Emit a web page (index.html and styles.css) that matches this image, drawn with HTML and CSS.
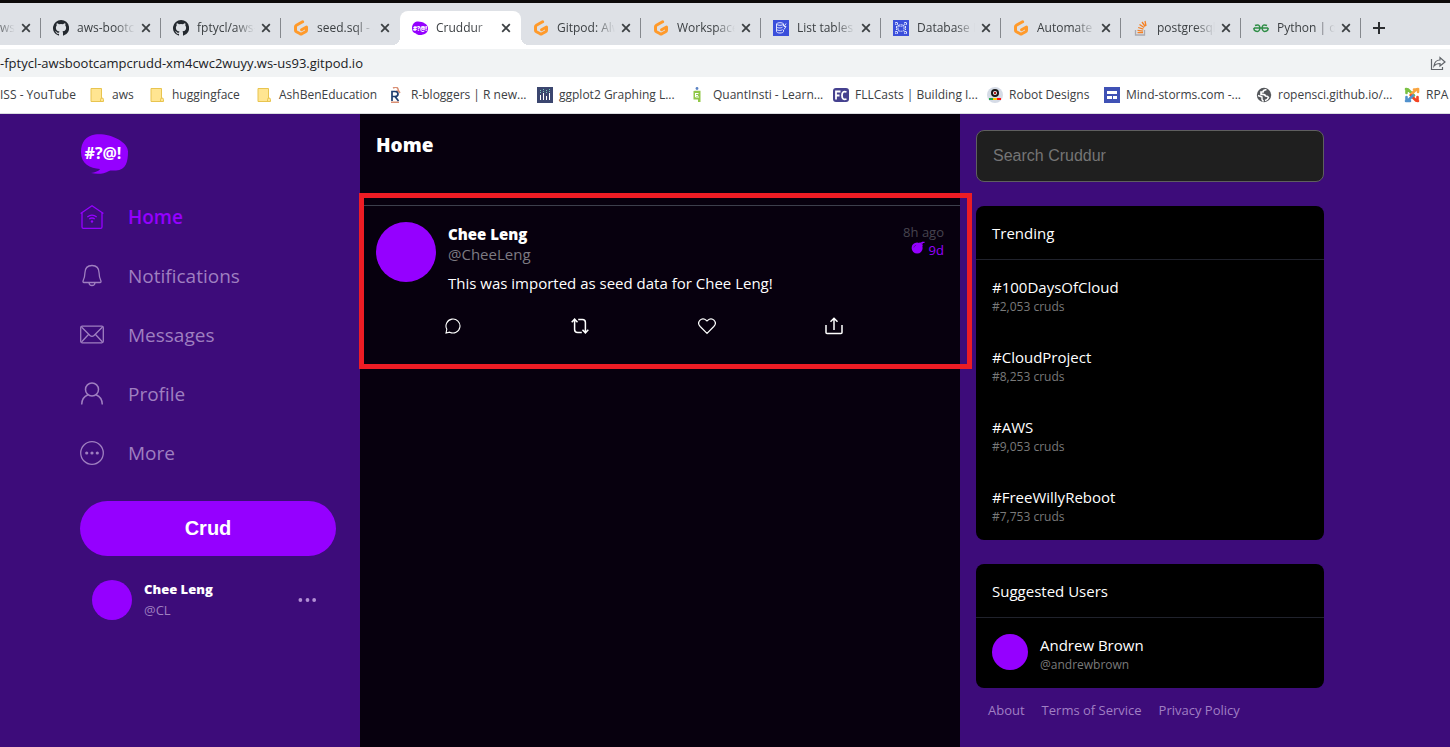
FILE: index.html
```html
<!DOCTYPE html>
<html lang="en">
<head>
<meta charset="utf-8">
<title>Cruddur</title>
<link rel="stylesheet" href="styles.css">
</head>
<body>
<svg class="sprite" aria-hidden="true">
  <symbol id="close" viewBox="0 0 10 10"><path d="M1.2 1.2l7.6 7.6M8.8 1.2L1.2 8.8" fill="none" stroke="#3c4043" stroke-width="1.8"/></symbol>
  <symbol id="github" viewBox="0 0 16 16"><path fill="#24292f" d="M8 0a8 8 0 0 0-2.53 15.59c.4.07.55-.17.55-.38v-1.34c-2.23.48-2.7-1.07-2.7-1.07-.36-.93-.89-1.17-.89-1.17-.73-.5.05-.49.05-.49.8.06 1.23.83 1.23.83.71 1.23 1.87.87 2.33.66.07-.52.28-.87.5-1.07-1.77-.2-3.64-.89-3.64-3.95 0-.88.31-1.59.82-2.15-.08-.2-.36-1.02.08-2.12 0 0 .67-.22 2.2.82a7.6 7.6 0 0 1 4 0c1.53-1.04 2.2-.82 2.2-.82.44 1.1.16 1.92.08 2.12.51.56.82 1.27.82 2.15 0 3.07-1.87 3.75-3.65 3.95.29.25.54.73.54 1.48v2.2c0 .21.15.46.55.38A8 8 0 0 0 8 0z"/></symbol>
  <symbol id="gitpod" viewBox="0 0 16 16"><path d="M9.6 1.8L3.4 5.2Q2.5 5.700 2.500 6.700V10.200Q2.500 11.200 3.400 11.700L7.200 13.800Q8 14.200 8.800 13.800L12.600 11.700Q13.500 11.200 13.500 10.200V7L8.600 9.700" fill="none" stroke="#ff9a2b" stroke-width="3" stroke-linejoin="round" stroke-linecap="round"/></symbol>
  <symbol id="bubble" viewBox="0 0 48 40"><path d="M15 .5C28-1.500 48 7 48 17.500C48 28 46 36 36 36.500C33 36.700 31 36 29 37C24 40 17 40.500 11 39C15 38.500 19 37 20 35C10 34.500 1 30 1 18C1 8 6 2 15 .5z" fill="#9500ff"/></symbol>
  <symbol id="folder" viewBox="0 0 14 14"><path d="M1 .5H11.500V10H12Q13.500 10 13.500 11.500V13.500H1z" fill="#ffe591" stroke="#e8c44f"/><path d="M10.500 13.500V11.500Q10.500 10 12 10" fill="none" stroke="#e8c44f"/></symbol>
</svg>

<header class="browser">
  <div class="tabs">
    <div class="tab tab-cut"><span class="tab-title">ws-</span><button class="tab-close" aria-label="Close tab"><svg><use href="#close"/></svg></button></div>
    <div class="tab"><svg class="favicon"><use href="#github"/></svg><span class="tab-title">aws-bootcamp</span><button class="tab-close" aria-label="Close tab"><svg><use href="#close"/></svg></button></div>
    <div class="tab"><svg class="favicon"><use href="#github"/></svg><span class="tab-title">fptycl/aws-boot</span><button class="tab-close" aria-label="Close tab"><svg><use href="#close"/></svg></button></div>
    <div class="tab tab-before"><svg class="favicon"><use href="#gitpod"/></svg><span class="tab-title">seed.sql - aws</span><button class="tab-close" aria-label="Close tab"><svg><use href="#close"/></svg></button></div>
    <div class="tab tab-active"><svg class="favicon" viewBox="0 0 16 16"><path d="M5 1.500C10 1 16 4 16 8S14 14 11 14.500C8 15.500 5 15 4 13.500C1 13 0 11 0 8S2 2 5 1.500z" fill="#9500ff"/><text x="8" y="10.500" text-anchor="middle" class="favicon-text">#?@!</text></svg><span class="tab-title">Cruddur</span><button class="tab-close" aria-label="Close tab"><svg><use href="#close"/></svg></button></div>
    <div class="tab tab-after"><svg class="favicon"><use href="#gitpod"/></svg><span class="tab-title">Gitpod: Always</span><button class="tab-close" aria-label="Close tab"><svg><use href="#close"/></svg></button></div>
    <div class="tab"><svg class="favicon"><use href="#gitpod"/></svg><span class="tab-title">Workspaces</span><button class="tab-close" aria-label="Close tab"><svg><use href="#close"/></svg></button></div>
    <div class="tab"><svg class="favicon" viewBox="0 0 16 16"><path fill="#3b4fdb" d="M0 0h16v16H0z"/><g fill="none" stroke="#dfe4ff"><ellipse cx="7" cy="4" rx="3.500" ry="1.300"/><path d="M3.500 4v7.500c0 2 7 2 7 0V10M3.500 6.500c0 1.800 5 1.800 6 .6M3.500 9c0 1.800 5 1.800 6 .6M10.500 4v2M13 3.500l-2 3h2l-2 3"/></g></svg><span class="tab-title">List tables</span><button class="tab-close" aria-label="Close tab"><svg><use href="#close"/></svg></button></div>
    <div class="tab"><svg class="favicon" viewBox="0 0 16 16"><path fill="#3b4fdb" d="M0 0h16v16H0z"/><g fill="none" stroke="#dfe4ff"><path d="M5 5.500v5q3 1.500 6 0v-5q-3-1.500-6 0q3 1.500 6 0M2.500 2.500h2v2h-2zM11.500 2.500h2v2h-2zM2.500 11.500h2v2h-2zM11.500 11.500h2v2h-2zM3.500 6v4M12.500 6v4" stroke-dasharray="2 .5"/></g></svg><span class="tab-title">Database D</span><button class="tab-close" aria-label="Close tab"><svg><use href="#close"/></svg></button></div>
    <div class="tab"><svg class="favicon"><use href="#gitpod"/></svg><span class="tab-title">Automate</span><button class="tab-close" aria-label="Close tab"><svg><use href="#close"/></svg></button></div>
    <div class="tab"><svg class="favicon" viewBox="0 0 16 16"><path d="M2.500 10v5h9v-5" fill="none" stroke="#a9a9b0" stroke-width="1.300"/><path d="M4.500 12.700h5.500M4.500 10.300l5.500.8M5.200 7.500l5.200 1.700M6.500 4.500l4.600 3M9 2l3.200 4.500M12 1l1 5" fill="none" stroke="#f48024" stroke-width="1.300"/></svg><span class="tab-title">postgresql</span><button class="tab-close" aria-label="Close tab"><svg><use href="#close"/></svg></button></div>
    <div class="tab"><svg class="favicon" viewBox="0 0 16 16"><path d="M1 8h14M2 5.500q4.500-2 5 2.500q-.5 4.500-4.500 3q-2-1-1.500-3M14 5.500q-4.500-2-5 2.500q.5 4.500 4.500 3q2-1 1.500-3" fill="none" stroke="#2f8d46" stroke-width="1.500"/></svg><span class="tab-title">Python | os</span><button class="tab-close" aria-label="Close tab"><svg><use href="#close"/></svg></button></div>
    <button class="new-tab" aria-label="New tab"><svg viewBox="0 0 12 12"><path d="M6 0v12M0 6h12" stroke="#2b2d30" stroke-width="2"/></svg></button>
  </div>
  <div class="address">
    <span>-fptycl-awsbootcampcrudd-xm4cwc2wuyy.ws-us93.gitpod.io</span>
    <button class="share" aria-label="Share"><svg viewBox="0 0 16 16"><path d="M1.500 4v10.500h11V12M4 11c.5-4 2.500-6 6-6V2.500L15 7l-5 4V8.500C7.500 8.500 5.500 9 4 11z" fill="none" stroke="#5f6368" stroke-width="1.200"/></svg></button>
  </div>
  <nav class="bookmarks" aria-label="Bookmarks">
    <a href="#">ISS - YouTube</a>
    <a href="#"><svg viewBox="0 0 16 16"><use href="#folder" x="0" y="1" width="14" height="14"/></svg>aws</a>
    <a href="#"><svg viewBox="0 0 16 16"><use href="#folder" x="0" y="1" width="14" height="14"/></svg>huggingface</a>
    <a href="#"><svg viewBox="0 0 16 16"><use href="#folder" x="0" y="1" width="14" height="14"/></svg>AshBenEducation</a>
    <a href="#"><svg viewBox="0 0 16 16"><path d="M4 1q4-2 5 1t-2 2M9 3l2 3M2 15.300h8" fill="none" stroke="#d98f74" stroke-width="1.500"/><path d="M3 14V4.500h3q3 0 3 2.500t-3 2.500H3M6 9.500l3.500 4.500" fill="none" stroke="#1e3d6e" stroke-width="1.700"/></svg>R-bloggers | R new...</a>
    <a href="#"><svg viewBox="0 0 16 16"><path fill="#3b466f" d="M0 0h16v16H0z"/><path d="M3.500 8v5M6.500 6v7M9.500 9v4M12.500 6v7" stroke="#fff"/><path d="M3.500 3v3M6.500 2v3M9.500 3v4M12.500 2v3" stroke="#74c7b8" stroke-dasharray="1 1"/></svg>ggplot2 Graphing L...</a>
    <a href="#"><svg viewBox="0 0 16 16"><circle cx="6" cy="1.500" r="1.400" fill="#5d84c4"/><path d="M4 3.800h5.500V15H7v-2.500H2.500V4z" fill="#91c848"/><path d="M4.500 6.500h3M4.500 6v4h3.500M4.500 8.500h2.500" stroke="#fff" fill="none"/></svg>QuantInsti - Learn...</a>
    <a href="#"><svg viewBox="0 0 16 16"><rect y="1" width="16" height="14" rx="3" fill="#45418f"/><path d="M3 12.500v-8h4.500M3 8.500h3.500M13.500 5q-4.500-1.500-4.500 3.500t4.500 3.500" fill="none" stroke="#fff" stroke-width="1.800"/></svg>FLLCasts | Building I...</a>
    <a href="#"><svg viewBox="0 0 16 16"><circle cx="8" cy="8" r="8" fill="#d5dbe6"/><circle cx="8" cy="6" r="4" fill="#191919"/><circle cx="8" cy="6" r="2" fill="#fff"/><circle cx="8" cy="6" r="1.200" fill="#b32020"/><path d="M2 12h4" stroke="#22a34a" stroke-width="2"/><path d="M6 12h4" stroke="#ffc800" stroke-width="2"/><path d="M10 12h4" stroke="#f11" stroke-width="2"/></svg>Robot Designs</a>
    <a href="#"><svg viewBox="0 0 16 16"><path fill="#3f51b5" d="M0 0h16v16H0z"/><path fill="#fff" d="M3 4h10v3H3zM3 9h5v3H3zM9 9h4v3H9z"/></svg>Mind-storms.com -...</a>
    <a href="#"><svg viewBox="0 0 16 16"><circle cx="8" cy="8" r="7.200" fill="#54575b"/><path d="M10.500 2.500Q7 3 7 5H5V7.500Q9 7 9.500 9Q12 9 12.500 10.500Q11.500 13 9 13.500" fill="none" stroke="#fff" stroke-width="1.600"/><path d="M2 8.500l4 1.500v2.500l1.500 2" fill="none" stroke="#fff" stroke-width="1.400"/></svg>ropensci.github.io/...</a>
    <a href="#"><svg viewBox="0 0 16 16"><g fill="none" stroke-width="2.600" stroke-linecap="round"><path d="M2 2l2 .5L10 8.500M2.500 2.500V6" stroke="#7ac143"/><path d="M14 2l-2 .5L6.500 8M10 2.500h4V5" stroke="#f9a541"/><path d="M14 14l-2-.5L7 8.500M13.500 10v4" stroke="#f44321"/><path d="M2 14l2-.5L9 8.500M2.500 10v4H6" stroke="#5091cd"/></g></svg>RPA</a>
  </nav>
</header>

<div class="page">
  <div class="side">
    <div class="side-inner">
      <a href="#" class="logo" aria-label="Cruddur"><svg viewBox="0 0 48 40"><use href="#bubble"/><text x="23" y="25" text-anchor="middle" class="logo-text">#?@!</text></svg></a>
      <nav class="menu" aria-label="Main">
        <a href="#" class="current"><svg viewBox="0 0 24 24"><path d="M.6 8.500L12 .8l11.400 7.700M2 7.600V22q0 1.300 1.300 1.300h17.400Q22 23.300 22 22V7.600M7.300 12q4.700-3.600 9.400 0M9.200 14q2.800-2 5.600 0" fill="none" stroke="currentColor" stroke-width="1.300"/><circle cx="12" cy="16.500" r="1.200" fill="currentColor"/></svg>Home</a>
        <a href="#"><svg viewBox="0 0 24 24"><path d="M12 1.500c-4.600 0-7 3.300-7.100 7.500C4.800 13 4.300 14.500 3.200 16.500Q2.500 18.500 4 18.500H20Q21.500 18.500 20.800 16.500C19.700 14.500 19.200 13 19.100 9 19 4.800 16.600 1.500 12 1.500zM9 18.700c.3 3.700 5.700 3.700 6 0" fill="none" stroke="currentColor" stroke-width="1.300"/></svg>Notifications</a>
        <a href="#"><svg viewBox="0 0 24 24"><rect x=".7" y="3.200" width="22.600" height="16.600" rx="1.500" fill="none" stroke="currentColor" stroke-width="1.300"/><path d="M1.500 4L10 12.500q2 1.800 4 0l8.500-8.500M1.500 19l7-7.500M22.500 19l-7-7.500" fill="none" stroke="currentColor" stroke-width="1.300"/></svg>Messages</a>
        <a href="#"><svg viewBox="0 0 24 24"><circle cx="12" cy="7.500" r="6.500" fill="none" stroke="currentColor" stroke-width="1.500"/><path d="M1.700 22.500c0-5.500 3-8.500 6.300-9.800M22.300 22.500c0-5.500-3-8.500-6.300-9.800" fill="none" stroke="currentColor" stroke-width="1.500"/></svg>Profile</a>
        <a href="#"><svg viewBox="0 0 24 24"><circle cx="12" cy="12" r="11.300" fill="none" stroke="currentColor" stroke-width="1.300"/><g fill="currentColor"><circle cx="6.700" cy="12" r="1.600"/><circle cx="12" cy="12" r="1.600"/><circle cx="17.300" cy="12" r="1.600"/></g></svg>More</a>
      </nav>
      <button class="crud">Crud</button>
      <div class="me">
        <div class="avatar avatar-md"></div>
        <div class="me-text"><strong>Chee Leng</strong><span>@CL</span></div>
        <button class="dots" aria-label="Account options"><svg viewBox="0 0 20 6"><circle cx="2.500" cy="3" r="2"/><circle cx="10" cy="3" r="2"/><circle cx="17" cy="3" r="2"/></svg></button>
      </div>
    </div>
  </div>

  <main class="feed">
    <h1>Home</h1>
    <div class="marked">
      <article class="post">
        <div class="post-top">
          <div class="avatar avatar-lg"></div>
          <div class="post-body">
            <strong>Chee Leng</strong>
            <span class="handle">@CheeLeng</span>
            <p>This was imported as seed data for Chee Leng!</p>
          </div>
          <div class="times">
            <span>8h ago</span>
            <span class="expires"><svg viewBox="0 0 16 16"><circle cx="7" cy="8" r="6.300" fill="currentColor"/><path d="M8.500 2.500l2-1 3 3.500-1.500 2z" fill="currentColor"/><path d="M10.500 3l2.500-1.500h2.500M12 3.500l1.500-.5" fill="none" stroke="currentColor" stroke-width="1.300"/><path d="M3.200 7.500Q3.800 5.200 5.800 4.800" fill="none" stroke="#5a0a9c"/></svg>9d</span>
          </div>
        </div>
        <div class="actions">
          <button aria-label="Reply"><svg viewBox="0 0 16 16"><path d="M1 15l.8-3.700A7 7 0 1 1 4.700 14.200z" fill="none" stroke="#fff" stroke-width="1.100"/></svg></button>
          <button aria-label="Repost"><svg class="wide" viewBox="0 0 18 16"><path d="M.7 4.200l2.900-3 2.900 3M3.600 1.500v10q0 3 3 3h4.200M17.300 11.800l-2.900 3-2.900-3M14.400 14.500v-10q0-3-3-3H7.200" fill="none" stroke="#fff" stroke-width="1.500"/></svg></button>
          <button aria-label="Like"><svg class="wide" viewBox="0 0 18 16"><path d="M9 15.300L2.200 8.500C-2 4 4-2 8.300 2.300L9 3l.7-.7C14-2 20 4 15.800 8.500z" fill="none" stroke="#fff" stroke-width="1.200"/></svg></button>
          <button aria-label="Share"><svg class="wide" viewBox="0 0 18 18"><path d="M1 8v7.500q0 1 1 1h14q1 0 1-1V8M9 13V1.500M5.500 4.800L9 1.300l3.500 3.500" fill="none" stroke="#fff" stroke-width="1.500"/></svg></button>
        </div>
      </article>
    </div>
  </main>

  <aside class="extras">
    <input class="search" type="text" placeholder="Search Cruddur" aria-label="Search Cruddur">
    <section class="card">
      <h2>Trending</h2>
      <a href="#" class="trend"><span>#100DaysOfCloud</span><small>#2,053 cruds</small></a>
      <a href="#" class="trend"><span>#CloudProject</span><small>#8,253 cruds</small></a>
      <a href="#" class="trend"><span>#AWS</span><small>#9,053 cruds</small></a>
      <a href="#" class="trend"><span>#FreeWillyReboot</span><small>#7,753 cruds</small></a>
    </section>
    <section class="card">
      <h2>Suggested Users</h2>
      <a href="#" class="user"><span class="avatar avatar-sm"></span><span class="user-text"><span>Andrew Brown</span><small>@andrewbrown</small></span></a>
    </section>
    <footer class="links"><a href="#">About</a><a href="#">Terms of Service</a><a href="#">Privacy Policy</a></footer>
  </aside>
</div>
</body>
</html>
```
FILE: styles.css
```css
* { box-sizing: border-box; }

body {
  margin: 0;
  min-height: 100vh;
  display: flex;
  flex-direction: column;
  font-family: "Open Sans", "Noto Sans", sans-serif;
  font-size: 15px;
  line-height: 20px;
  color: #fff;
  background: #3d0c7a;
}

a { color: inherit; text-decoration: none; }
button { padding: 0; border: 0; background: none; color: inherit; cursor: pointer; }
svg { display: block; flex: none; }
.sprite { position: absolute; width: 0; height: 0; }

/* browser chrome */
.browser {
  background: #fff;
  color: #3c4043;
  font-size: 12px;
  overflow: hidden;
  border-bottom: 1px solid #dadce0;
}

.tabs {
  display: flex;
  height: 45px;
  padding-top: 8px;
  background: #dee1e6;
  border-top: 3px solid #0c0a0a;
}

.tab {
  display: flex;
  align-items: center;
  flex: 0 0 120px;
  min-width: 0;
  height: 34px;
  padding: 0 10px 0 12px;
  background: linear-gradient(#85888d, #85888d) right center / 1px 20px no-repeat;
}
.tab-cut { flex-basis: 41px; padding-left: 0; }
.tab-active { flex-basis: 121px; background: #fff; border-radius: 8px 8px 0 0; }
.tab-before { flex-basis: 119px; background: radial-gradient(circle at 0 0, transparent 8px, #fff 8px) right bottom / 8px 8px no-repeat; }
.tab-after { background: linear-gradient(#85888d, #85888d) right center / 1px 20px no-repeat, radial-gradient(circle at 8px 0, transparent 8px, #fff 8px) left bottom / 8px 8px no-repeat; }

.favicon { width: 16px; height: 16px; margin-right: 8px; }
.favicon-text { font: 800 6px "Open Sans", sans-serif; fill: #fff; }
.tab-title {
  flex: 1 1 0;
  min-width: 0;
  overflow: hidden;
  white-space: nowrap;
  -webkit-mask-image: linear-gradient(to left, transparent, #000 20px);
  mask-image: linear-gradient(to left, transparent, #000 20px);
}
.tab-close { margin-left: 6px; }
.tab-close svg { width: 10px; height: 10px; }
.new-tab { margin-left: 12px; height: 34px; }
.new-tab svg { width: 12px; height: 12px; }

.address {
  display: flex;
  align-items: center;
  justify-content: space-between;
  height: 28px;
  margin-top: 4px;
  padding-right: 4px;
  background: #f1f3f4;
  color: #202124;
  font-size: 13px;
}
.share svg { width: 16px; height: 16px; }

.bookmarks {
  display: grid;
  grid-template-columns: 90px 60px 107px 132px 148px 154px 142px 154px 117px 152px 148px auto;
  align-items: center;
  height: 36px;
}
.bookmarks a { display: flex; align-items: center; gap: 6px; white-space: nowrap; }
.bookmarks svg { width: 16px; height: 16px; }

/* page columns */
.page {
  flex: 1;
  display: grid;
  grid-template-columns: 360fr 600fr 490fr;
}

.avatar { flex: none; border-radius: 50%; background: #9500ff; }
.avatar-lg { width: 60px; height: 60px; }
.avatar-md { width: 40px; height: 40px; }
.avatar-sm { width: 36px; height: 36px; }

/* left column */
.side { display: flex; justify-content: flex-end; padding: 20px 24px 0; }
.side-inner { flex: 0 1 256px; }
.logo { display: block; width: 48px; }
.logo svg { width: 48px; height: 40px; }
.logo-text { font: 700 16px "Open Sans", sans-serif; fill: #fff; }

.menu { display: flex; flex-direction: column; margin: 13px 0 19px; }
.menu a {
  display: flex;
  align-items: center;
  gap: 24px;
  height: 59px;
  font-size: 19px;
  color: #9f7fc0;
}
.menu svg { width: 24px; height: 24px; }
.menu .current { color: #9500ff; font-weight: 600; }

.crud {
  width: 100%;
  height: 55px;
  border-radius: 28px;
  background: #9500ff;
  color: #fff;
  font: bold 20px "Liberation Sans", Arial, sans-serif;
}

.me { display: flex; align-items: center; gap: 12px; margin-top: 23px; padding: 0 19px 0 12px; }
.me-text { flex: 1; display: flex; flex-direction: column; font-size: 13px; line-height: 21px; color: #9f7fc0; }
.me-text strong { font-weight: 800; color: #fff; }
.dots svg { width: 19px; height: 6px; fill: #b28fd4; }

/* feed */
.feed { background: #07000e; }
.feed h1 { margin: 0; padding: 19px 16px 41px; font-size: 19px; line-height: 24px; font-weight: 800; }

.marked { position: relative; padding: 7px 0 12px; }
.marked::after {
  content: "";
  position: absolute;
  inset: -5px -12px 0 -1px;
  border: 5px solid #ed1c24;
  pointer-events: none;
}

.post { border-top: 1px solid #3c3f4c; padding: 16px 16px 22px; }
.post-top { display: flex; gap: 12px; }
.post-body { flex: 1; display: flex; flex-direction: column; padding-top: 2px; }
.post-body strong { font-weight: 800; }
.handle { color: #7d7a82; }
.post-body p { margin: 9px 0 0; }
.times { display: flex; flex-direction: column; align-items: flex-end; font-size: 13px; line-height: 18px; color: #46444f; padding-top: 1px; }
.expires { display: flex; gap: 4px; color: #9500ff; }
.expires svg { width: 14px; height: 14px; }

.actions {
  display: grid;
  grid-template-columns: repeat(4, 1fr);
  justify-items: center;
  align-items: center;
  margin-top: 24px;
  padding: 0 47px 0 13px;
}
.actions svg { width: 16px; height: 16px; }
.actions .wide { width: 18px; height: 18px; }

/* right column */
.extras { display: flex; flex-direction: column; max-width: 380px; padding: 16px; }
.search {
  height: 52px;
  padding: 0 16px;
  border: 1px solid #5f5f5f;
  border-radius: 8px;
  background: #1f1f1f;
  color: #fff;
  font: 16px "Liberation Sans", Arial, sans-serif;
}
.search::placeholder { color: #757575; }

.card { margin-top: 24px; border-radius: 8px; background: #000; }
.card h2 {
  margin: 0;
  padding: 17px 16px 16px;
  border-bottom: 1px solid #20222c;
  font-size: 15px;
  font-weight: 400;
}
.card small { font-size: 12px; line-height: 20px; color: #7a7a7a; }
.trend { display: flex; flex-direction: column; height: 70px; padding: 17px 16px 0; }
.user { display: flex; gap: 12px; padding: 16px 16px 18px; }
.user-text { display: flex; flex-direction: column; padding-top: 1px; margin-bottom: -5px; }

.links { display: flex; gap: 17px; padding: 12px; font-size: 13px; color: #a07fc4; }
```
